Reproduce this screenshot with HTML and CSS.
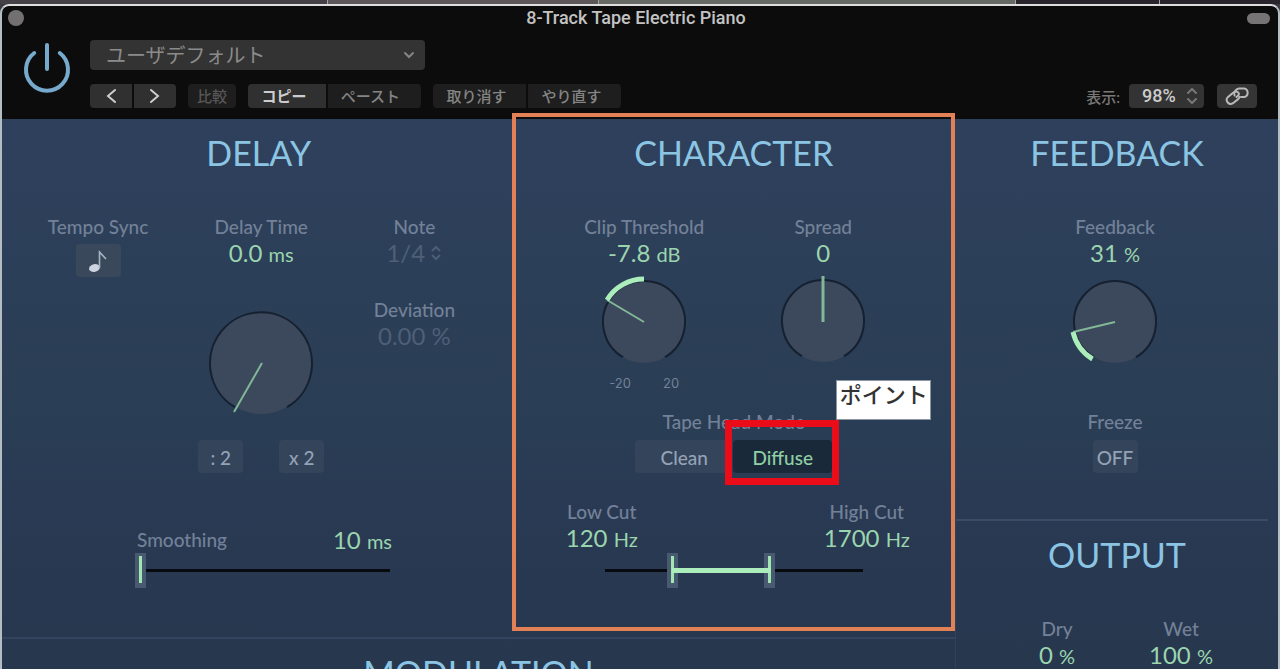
FILE: index.html
```html
<!DOCTYPE html>
<html lang="ja">
<head>
<meta charset="utf-8">
<title>8-Track Tape Electric Piano</title>
<link rel="stylesheet" href="styles.css">
</head>
<body>
<div class="backdrop"><span class="backdrop-a"></span><span class="backdrop-b"></span><span class="backdrop-c"></span><span class="backdrop-d"></span><span class="backdrop-e"></span></div>
<div class="window">
  <header class="header">
    <div class="titlebar">
      <button class="close" aria-label="Close"></button>
      <h1 class="title">8-Track Tape Electric Piano</h1>
      <button class="pill" aria-label="Toggle toolbar"></button>
    </div>
    <div class="toolbar">
      <button class="power" aria-label="Power">
        <svg width="48" height="52" viewBox="0 0 48 52" fill="none" stroke="#76a9cc" stroke-width="4" stroke-linecap="round"><path d="M24 4v24"/><path d="M11.200 12A21 21 0 1 0 36.800 12"/></svg>
      </button>
      <div class="controls">
        <div class="picker preset">
          <select aria-label="Preset"><option>ユーザデフォルト</option></select>
          <svg width="12" height="8" viewBox="0 0 12 8" fill="none" stroke="#858585" stroke-width="2" stroke-linecap="round"><path d="M2 2l4 4 4-4"/></svg>
        </div>
        <div class="actions">
          <div class="group">
            <button class="btn arrow" aria-label="Previous"><svg width="12" height="16" viewBox="0 0 12 16" fill="none" stroke="#ccc" stroke-width="2" stroke-linecap="round"><path d="M10 2L3 8l7 6"/></svg></button>
            <button class="btn arrow" aria-label="Next"><svg width="12" height="16" viewBox="0 0 12 16" fill="none" stroke="#ccc" stroke-width="2" stroke-linecap="round"><path d="M2 2l7 6-7 6"/></svg></button>
          </div>
          <div class="group"><button class="btn compare">比較</button></div>
          <div class="group"><button class="btn copy">コピー</button><button class="btn dim paste">ペースト</button></div>
          <div class="group"><button class="btn dim undo">取り消す</button><button class="btn dim undo">やり直す</button></div>
          <div class="view">
            <label for="zoom">表示:</label>
            <div class="picker zoom">
              <select id="zoom"><option>98%</option></select>
              <svg width="12" height="18" viewBox="0 0 12 18" fill="none" stroke="#777" stroke-width="2" stroke-linecap="round"><path d="M2 6l4-4 4 4M2 12l4 4 4-4"/></svg>
            </div>
            <button class="btn link" aria-label="Link"><svg width="26" height="20" viewBox="0 0 26 20" fill="none" stroke="#b9b9b9" stroke-width="2" stroke-linecap="round"><path d="M10.500 9.500C9.500 6.500 11.500 3 15 2.500H20A4.300 4.300 0 0 1 20 11H17"/><path d="M12.500 11L14.500 9.200C15.500 7.500 14 5 11.500 5.500Q10 6 8.500 7.200L3.800 11.200A4 4 0 0 0 9 17.200L13.500 13.600Q15 12.500 15.500 11"/></svg></button>
          </div>
        </div>
      </div>
    </div>
  </header>

  <main class="panels">
    <div class="left">
      <section class="delay">
        <h2>DELAY</h2>
        <div class="delay-grid">
          <div class="param">
            <span class="label" id="sync">Tempo Sync</span>
            <button class="key note-key" aria-labelledby="sync"><svg width="20" height="24" viewBox="0 0 20 24"><ellipse cx="6.500" cy="19" rx="5.500" ry="3.800" transform="rotate(-12 6.500 19)" fill="#cbd4df"/><path d="M11.500 19V3L18 10" fill="none" stroke="#a9b4c3" stroke-width="1.600"/></svg></button>
          </div>
          <div class="param">
            <span class="label">Delay Time</span>
            <output class="value">0.0 <small>ms</small></output>
            <svg class="knob-large" width="112" height="112" viewBox="0 0 112 112" fill="none"><circle cx="56" cy="56" r="51" fill="#3c485b"/><path d="M30 100.200A51 51 0 1 1 82 100.200" stroke="#152131" stroke-width="2"/><path d="M57 56L29 105" stroke="#82b898" stroke-width="2"/></svg>
            <div class="multipliers"><button class="key">: 2</button><button class="key">x 2</button></div>
          </div>
          <div class="param">
            <label class="label" for="note">Note</label>
            <div class="picker note">
              <select id="note"><option>1/4</option></select>
              <svg width="12" height="16" viewBox="0 0 12 16" fill="none" stroke="#4c5d74" stroke-width="2"><path d="M2 6l4-4 4 4M2 10l4 4 4-4"/></svg>
            </div>
            <span class="label deviation">Deviation</span>
            <output class="value off">0.00 %</output>
          </div>
        </div>
        <div class="smoothing">
          <div class="smoothing-head"><label class="label" for="smooth">Smoothing</label><output class="value">10 <small>ms</small></output></div>
          <div class="slider"><input id="smooth" type="range" min="0" max="100" value="0"></div>
        </div>
      </section>

      <section class="character">
        <h2>CHARACTER</h2>
        <div class="pair">
          <div class="param">
            <span class="label">Clip Threshold</span>
            <output class="value">-7.8 <small>dB</small></output>
            <svg class="knob" width="92" height="92" viewBox="0 0 92 92" fill="none"><circle cx="46" cy="46" r="41" fill="#3c485b"/><path d="M25 81.200A41 41 0 1 1 67 81.200" stroke="#152131" stroke-width="2"/><path d="M46 46L9 24" stroke="#82b898" stroke-width="2"/><path d="M9 24A43 43 0 0 1 46 3" stroke="#abeebb" stroke-width="5"/></svg>
            <div class="scale"><span>-20</span><span>20</span></div>
          </div>
          <div class="param">
            <span class="label">Spread</span>
            <output class="value">0</output>
            <svg class="knob" width="92" height="92" viewBox="0 0 92 92" fill="none"><circle cx="46" cy="46" r="41" fill="#3c485b"/><path d="M25 81.200A41 41 0 1 1 67 81.200" stroke="#152131" stroke-width="2"/><path d="M46 1V47" stroke="#82b898" stroke-width="3"/></svg>
          </div>
        </div>
        <div class="param head-mode">
          <span class="label">Tape Head Mode</span>
          <div class="modes">
            <button class="key clean">Clean</button>
            <button class="key diffuse">Diffuse</button>
            <span class="callout"></span>
            <span class="tip">ポイント</span>
          </div>
        </div>
        <div class="cuts">
          <div class="param"><label class="label" for="low">Low Cut</label><output class="value">120 <small>Hz</small></output></div>
          <div class="param"><label class="label" for="high">High Cut</label><output class="value">1700 <small>Hz</small></output></div>
        </div>
        <div class="slider band">
          <input id="low" type="range" min="0" max="100" value="26">
          <input id="high" type="range" min="0" max="100" value="64">
        </div>
        <span class="outline"></span>
      </section>

      <section class="modulation"><h2>MODULATION</h2></section>
    </div>

    <div class="right">
      <section class="feedback">
        <h2>FEEDBACK</h2>
        <div class="param">
          <span class="label">Feedback</span>
          <output class="value">31 <small>%</small></output>
          <svg class="knob" width="92" height="92" viewBox="0 0 92 92" fill="none"><circle cx="46" cy="46" r="41" fill="#3c485b"/><path d="M25 81.200A41 41 0 1 1 67 81.200" stroke="#152131" stroke-width="2"/><path d="M46 46L4 56" stroke="#82b898" stroke-width="2"/><path d="M4 56A43 43 0 0 0 23.500 83" stroke="#abeebb" stroke-width="5"/></svg>
          <span class="label freeze" id="freeze">Freeze</span>
          <button class="key freeze-key" aria-describedby="freeze">OFF</button>
        </div>
      </section>
      <section class="output">
        <h2>OUTPUT</h2>
        <div class="mix">
          <div class="param"><span class="label">Dry</span><output class="value">0 <small>%</small></output></div>
          <div class="param"><span class="label">Wet</span><output class="value">100 <small>%</small></output></div>
        </div>
      </section>
    </div>
  </main>
</div>
</body>
</html>
```
FILE: styles.css
```css
* { box-sizing: border-box; }

body {
  margin: 0;
  height: 100vh;
  overflow: hidden;
  display: flex;
  flex-direction: column;
  background: #3b3940;
  font-family: Lato, "Noto Sans CJK JP", sans-serif;
}

button, select { font: inherit; border: 0; margin: 0; padding: 0; background: none; color: inherit; }
select { appearance: none; }

.backdrop { display: flex; height: 4px; flex: none; gap: 1px; background: #a5a5a5; }
.backdrop .backdrop-a { flex: 328; background: #454046; }
.backdrop .backdrop-b { flex: 270; background: #5d575a; }
.backdrop .backdrop-c { flex: 417; background: #656a65; }
.backdrop .backdrop-d { flex: 143; background: #29252d; }
.backdrop .backdrop-e { flex: 120; background: #29252d; }

.window {
  flex: 1 0 auto;
  display: flex;
  flex-direction: column;
  border: 2px solid #b4bdc4;
  border-top-color: #dedede;
  border-bottom: 0;
  border-radius: 9px 9px 0 0;
  overflow: hidden;
  background: #0c0c0c;
}

/* Header */
.header { padding-bottom: 11px; }
.titlebar {
  display: grid;
  grid-template-columns: 1fr auto 1fr;
  align-items: center;
  padding: 0 8px 0 6px;
  height: 24px;
}
.close { width: 16px; height: 16px; border-radius: 8px; background: #737071; }
.pill { width: 23px; height: 11px; border-radius: 6px; background: #777475; justify-self: end; }
.title { margin: 0 6px 0 0; font: 500 18px/24px Roboto, sans-serif; color: #c3c3c3; }

.toolbar { display: flex; padding: 10px 21px 0; gap: 18px; }
.power { width: 49px; height: 54px; flex: none; }
.power svg { display: block; }
.controls { flex: 1; display: flex; flex-direction: column; gap: 14px; }

.picker { display: grid; align-items: center; }
.picker > * { grid-area: 1 / 1; }
.picker svg { justify-self: end; pointer-events: none; }
.preset { width: 335px; height: 30px; border-radius: 4px; background: #333; color: #8b8b8b; font-size: 20px; padding-right: 10px; }
.preset select { height: 30px; padding-left: 16px; text-align: left; }

.actions { display: flex; gap: 12px; font-size: 15px; font-weight: 500; }
.group { display: flex; gap: 2px; border-radius: 4px; overflow: hidden; }
.btn { height: 24px; line-height: 24px; background: #303030; color: #ccc; white-space: nowrap; }
.btn svg { display: block; margin: 0 auto; }
.arrow { width: 42px; }
.compare { width: 48px; background: #1e1e1e; color: #565656; }
.copy { width: 78px; padding-right: 6px; font-weight: 700; }
.dim { background: #1e1e1e; color: #858585; }
.paste { width: 93px; padding-right: 8px; }
.undo { width: 93px; padding-right: 6px; }
.view { margin-left: auto; display: flex; align-items: center; color: #777; }
.view label { margin-right: 9px; }
.zoom { width: 75px; height: 24px; padding: 0 6px 0 13px; border-radius: 4px; background: #333; color: #ccc; font: 500 18px/24px Roboto, sans-serif; }
.link { width: 40px; margin-left: 13px; border-radius: 4px; background: #353535; }

/* Panels */
.panels {
  flex: 1;
  display: grid;
  grid-template-columns: 954fr 322fr;
  background: linear-gradient(#2f405c 0, #2c3f58 24%, #293d54 52%, #2a3a54 60%, #26374e 88%, #25354c 100%);
}
.left { display: grid; grid-template-columns: 514fr 440fr; grid-template-rows: auto 1fr; border-right: 1px solid #2f425c; }
.right { display: flex; flex-direction: column; }
section { padding-top: 14px; }
h2 { margin: 0 0 42px; font-size: 34px; line-height: 40px; font-weight: 400; text-align: center; color: #8bc5e3; }

.param { display: flex; flex-direction: column; align-items: center; }
.label { font-size: 19px; line-height: 24px; font-weight: 500; color: #738198; white-space: nowrap; }
.value { font-size: 24px; line-height: 28px; color: #9bd5ae; white-space: nowrap; }
.value small { font-size: 20px; }
.value.off { color: #4e5f76; }
.key { height: 33px; min-width: 45px; border-radius: 4px; background: #34445b; color: #94a2b5; font-size: 19px; font-weight: 500; line-height: 35px; }

.delay-grid { display: grid; grid-template-columns: 160fr 166fr 140fr; padding: 0 31px 0 16px; }
.note-key { margin-top: 5px; background: #3a485c; }
.note-key svg { display: block; margin: 0 auto; }
.knob-large { margin-top: 39px; }
.multipliers { display: flex; gap: 36px; margin-top: 21px; }
.note { height: 28px; width: 56px; }
.note select { justify-self: start; font-size: 24px; line-height: 28px; color: #4e5f76; }
.deviation { margin-top: 31px; }

.smoothing { width: 260px; margin: 54px 0 49px 133px; }
.smoothing-head { display: flex; justify-content: space-between; align-items: center; padding: 0 3px 0 2px; height: 26px; }

/* Sliders */
.slider { display: grid; height: 35px; background: linear-gradient(#070a0e, #070a0e) center / calc(100% - 10px) 3px no-repeat; }
.slider input { grid-area: 1 / 1; appearance: none; width: 100%; height: 35px; margin: 0; background: none; pointer-events: none; }
.slider input::-webkit-slider-thumb {
  appearance: none;
  pointer-events: auto;
  width: 11px;
  height: 35px;
  background: linear-gradient(#a0e5b2, #a0e5b2) center 3px / 3px 27px no-repeat, #485a70;
}
.band { width: 268px; margin: 0 auto 48px; }
.band::before { content: ""; grid-area: 1 / 1; align-self: center; height: 5px; margin: 0 36% 0 27%; background: #abeebb; z-index: 1; }

.character { position: relative; padding-right: 3px; }
.pair { display: grid; grid-template-columns: 179px 179px; justify-content: center; }
.knob { margin-top: 8px; }
.scale { display: flex; justify-content: space-between; width: 70px; margin-top: 7px; font: 13px/16px Inter, sans-serif; color: #738198; }
.head-mode { margin-top: 19px; }
.modes { position: relative; display: flex; gap: 6px; margin-top: 6px; }
.clean { width: 92px; padding-left: 6px; }
.diffuse { width: 99px; background: #1a2939; color: #8fcfa5; }
.callout { position: absolute; inset: -20px -7px -12px 90px; border: 7px solid #ea0c18; pointer-events: none; }
.tip { position: absolute; left: 201px; bottom: 53px; width: 95px; height: 40px; border: 1px solid #8b95a3; background: #fff; color: #333; font-size: 22px; font-weight: 500; line-height: 28px; text-align: center; }
.cuts { display: flex; justify-content: space-between; width: 352px; margin: 27px auto 0; padding: 0 0 0 8px; }
.outline { position: absolute; inset: -6px 0 6px -3px; border: 4px solid #e28155; pointer-events: none; }

.modulation { grid-column: 1 / -1; border-top: 2px solid #33455e; }
.feedback { padding-bottom: 46px; }
.feedback .param { padding-right: 4px; }
.freeze { margin-top: 42px; }
.freeze-key { margin-top: 6px; }
.output { flex: 1; margin-right: 10px; padding-left: 10px; border-top: 2px solid #3a4c63; }
.mix { display: grid; grid-template-columns: 124px 124px; justify-content: center; padding-left: 4px; }
```
